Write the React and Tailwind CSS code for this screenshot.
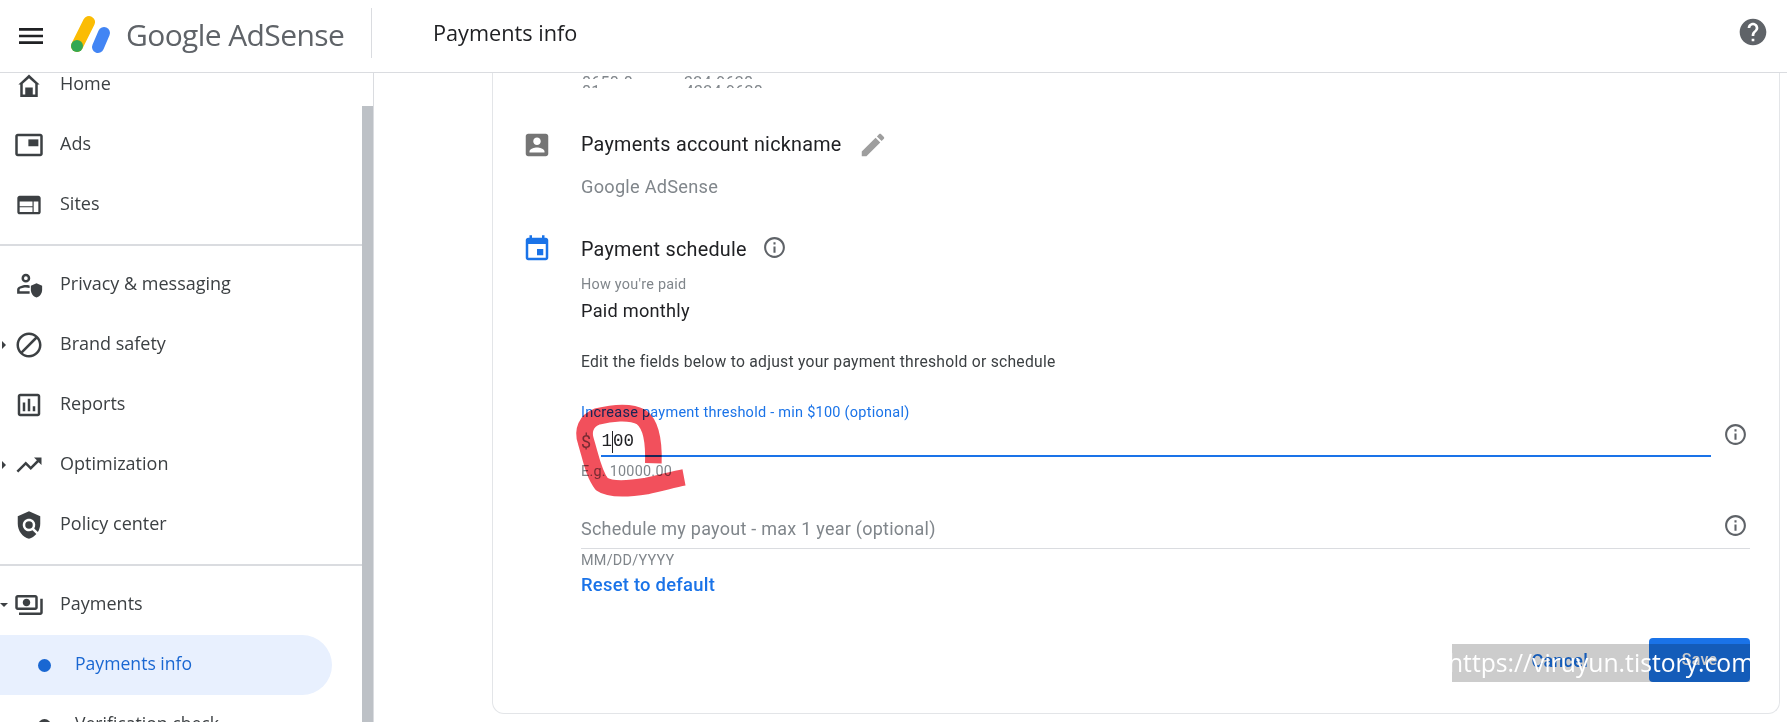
import React from 'react';

const Icon = ({ d, size = 30, className = '', children }) => (
    <svg viewBox="0 0 24 24" width={size} height={size} fill="currentColor" className={`shrink-0 ${className}`}>
        {d && <path fillRule="evenodd" d={d} />}
        {children}
    </svg>
);

const paths = {
    menu: 'M3 18h18v-2H3v2zm0-5h18v-2H3v2zm0-7v2h18V6H3z',
    web: 'M20 4H4c-1.1 0-2 .9-2 2v12c0 1.1.9 2 2 2h16c1.1 0 2-.9 2-2V6c0-1.1-.9-2-2-2zm-5 14H4v-4h11v4zm0-5H4V9h11v4zm5 5h-4V9h4v9z',
    block: 'M12 2C6.48 2 2 6.48 2 12s4.48 10 10 10 10-4.48 10-10S17.52 2 12 2zM4 12c0-4.42 3.58-8 8-8 1.85 0 3.55.63 4.9 1.69L5.69 16.9C4.63 15.55 4 13.85 4 12zm8 8c-1.85 0-3.55-.63-4.9-1.69L18.31 7.1C19.37 8.45 20 10.15 20 12c0 4.42-3.58 8-8 8z',
    reports: 'M19 3H5c-1.1 0-2 .9-2 2v14c0 1.1.9 2 2 2h14c1.1 0 2-.9 2-2V5c0-1.1-.9-2-2-2zm0 16H5V5h14v14zM7 10h2v7H7zm4-3h2v10h-2zm4 6h2v4h-2z',
    trending: 'M16 6l2.29 2.29-4.88 4.88-4-4L2 16.59 3.41 18l6-6 4 4 6.3-6.29L22 12V6z',
    policy: 'M21 5l-9-4-9 4v6c0 5.55 3.84 10.74 9 12 2.3-.56 4.33-1.9 5.88-3.71l-3.12-3.12c-1.94 1.29-4.58 1.07-6.29-.64-1.95-1.95-1.95-5.12 0-7.07 1.95-1.95 5.12-1.95 7.07 0 1.71 1.71 1.92 4.35.64 6.29l2.9 2.9C20.29 15.69 21 13.38 21 11V5z',
    payments: 'M19 14V6c0-1.1-.9-2-2-2H3c-1.1 0-2 .9-2 2v8c0 1.1.9 2 2 2h14c1.1 0 2-.9 2-2zm-2 0H3V6h14v8zm-7-7c-1.66 0-3 1.34-3 3s1.34 3 3 3 3-1.34 3-3-1.34-3-3-3zm13 0v11c0 1.1-.9 2-2 2H4v-2h17V7h2z',
    account: 'M19 3H5c-1.11 0-2 .9-2 2v14c0 1.1.89 2 2 2h14c1.1 0 2-.9 2-2V5c0-1.1-.9-2-2-2zm-7 3c1.66 0 3 1.34 3 3s-1.34 3-3 3-3-1.34-3-3 1.34-3 3-3zm6 12H6v-1c0-2 4-3.1 6-3.1s6 1.1 6 3.1v1z',
    edit: 'M3 17.25V21h3.75L17.81 9.94l-3.75-3.75L3 17.25zM20.71 7.04c.39-.39.39-1.02 0-1.41l-2.34-2.34c-.39-.39-1.02-.39-1.41 0l-1.83 1.83 3.75 3.75 1.83-1.83z',
    event: 'M17 12h-5v5h5v-5zM16 1v2H8V1H6v2H5c-1.11 0-1.99.9-1.99 2L3 19c0 1.1.89 2 2 2h14c1.1 0 2-.9 2-2V5c0-1.1-.9-2-2-2h-1V1h-2zm3 18H5V8h14v11z',
    info: 'M11 7h2v2h-2zm0 4h2v6h-2zm1-9C6.48 2 2 6.48 2 12s4.48 10 10 10 10-4.48 10-10S17.52 2 12 2zm0 18c-4.41 0-8-3.59-8-8s3.59-8 8-8 8 3.59 8 8-3.59 8-8 8z',
    help: 'M12 2C6.48 2 2 6.48 2 12s4.48 10 10 10 10-4.48 10-10S17.52 2 12 2zm1 17h-2v-2h2v2zm2.07-7.75l-.9.92C13.45 12.9 13 13.5 13 15h-2v-.5c0-1.1.45-2.1 1.17-2.83l1.24-1.26c.37-.36.59-.86.59-1.41 0-1.1-.9-2-2-2s-2 .9-2 2H8c0-2.21 1.79-4 4-4s4 1.79 4 4c0 .88-.36 1.68-.93 2.25z',
};

const navIcons = {
    home: (
        <Icon d="M12 3.500L3.500 11.500H5V21.500H19V11.500H20.500ZM12 6.500L17 11V19.500H7V11Z">
            <rect x="9" y="14" width="6" height="6.500" />
        </Icon>
    ),
    ads: (
        <Icon d="M21 3H3C1.900 3 1 3.900 1 5V19C1 20.100 1.900 21 3 21H21C22.100 21 23 20.100 23 19V5C23 3.900 22.100 3 21 3ZM21 19H3V5H21Z">
            <rect x="11.500" y="7.500" width="8" height="5.500" />
        </Icon>
    ),
    sites: <Icon d={paths.web} size={28} className="mx-[1px]" />,
    privacy: (
        <Icon d="M9.5 3a3.5 3.5 0 1 1 0 7 3.5 3.5 0 0 1 0-7zm0 2a1.5 1.500 0 1 0 0 3 1.500 1.500 0 0 0 0-3zM9.500 12c1 0 2 .12 3 .38v2.060c-1-.28-2-.44-3-.44-2.600 0-5 1-5 1.600V17h8v2H2.500v-3.400C2.500 13.300 7 12 9.500 12z">
            <path d="M18 10.500l4.500 2v3.300c0 2.900-1.900 5.600-4.500 6.200-2.600-.6-4.500-3.300-4.500-6.200v-3.300z" />
        </Icon>
    ),
    brand: <Icon d={paths.block} />,
    reports: <Icon d={paths.reports} />,
    optimization: <Icon d={paths.trending} />,
    policy: (
        <Icon d={paths.policy}>
            <circle cx="12" cy="12" r="3" />
        </Icon>
    ),
    payments: <Icon d={paths.payments} />,
};

const Caret = ({ open }) =>
    open ? (
        <span className="w-0 h-0 border-x-[4px] border-x-transparent border-t-[4px] border-t-[#3c4043]" />
    ) : (
        <span className="ml-[2px] w-0 h-0 border-y-[4px] border-y-transparent border-l-[4px] border-l-[#3c4043]" />
    );

const NavRow = ({ icon, label, caret }) => (
    <div className="h-[60px] flex items-center text-[#3c4043]">
        <div className="w-[14px] flex items-center">{caret && <Caret open={caret === 'open'} />}</div>
        {icon}
        <span className="ml-[16px] -mt-[3px] text-[18px] text-[#3c4043]">{label}</span>
    </div>
);

const Divider = () => <div className="h-[2px] my-[-1px] bg-[#dadce0]" />;

const Sidebar = () => (
    <aside className="w-[374px] shrink-0 flex border-r border-[#dadce0] overflow-hidden font-['Open_Sans',sans-serif]">
        <nav className="w-[362px] -mt-[18px]">
            <NavRow icon={navIcons.home} label="Home" />
            <NavRow icon={navIcons.ads} label="Ads" />
            <NavRow icon={navIcons.sites} label="Sites" />
            <div className="h-[10px]" />
            <Divider />
            <div className="h-[10px]" />
            <NavRow icon={navIcons.privacy} label="Privacy & messaging" />
            <NavRow icon={navIcons.brand} label="Brand safety" caret="closed" />
            <NavRow icon={navIcons.reports} label="Reports" />
            <NavRow icon={navIcons.optimization} label="Optimization" caret="closed" />
            <NavRow icon={navIcons.policy} label="Policy center" />
            <div className="h-[10px]" />
            <Divider />
            <div className="h-[10px]" />
            <NavRow icon={navIcons.payments} label="Payments" caret="open" />
            <div className="w-[332px] h-[60px] flex items-center bg-[#e8f0fe] rounded-r-full text-[#1967d2]">
                <span className="ml-[38px] w-[13px] h-[13px] rounded-full bg-[#1967d2]" />
                <span className="ml-[24px] -mt-[3px] text-[17.6px]">Payments info</span>
            </div>
            <div className="h-[60px] flex items-center text-[#3c4043]">
                <span className="ml-[38px] w-[13px] h-[13px] rounded-full bg-[#3c4043]" />
                <span className="ml-[24px] -mt-[3px] text-[17.6px]">Verification check</span>
            </div>
        </nav>
        <div className="w-[11px] mt-[33px] bg-[#bdc1c6]" />
    </aside>
);

const Header = () => (
    <header className="h-[73px] shrink-0 flex items-center border-b border-[#dadce0] bg-white">
        <Icon d={paths.menu} size={32} className="ml-[15px] text-[#202124]" />
        <svg viewBox="0 0 42 40" width="42" height="40" className="ml-[23px] -mt-[3px] shrink-0">
            <line x1="19" y1="7" x2="7" y2="31" stroke="#fbbc04" strokeWidth="12" strokeLinecap="round" />
            <circle cx="7" cy="31" r="6" fill="#34a853" />
            <line x1="34" y1="18" x2="28" y2="32" stroke="#4285f4" strokeWidth="12" strokeLinecap="round" />
        </svg>
        <span className="ml-[14px] w-[216px] -mt-[4px] text-[30px] text-[#5f6368] font-['Open_Sans',sans-serif] whitespace-nowrap tracking-[-0.6px]">Google AdSense</span>
        <div className="ml-[29px] -mt-[6px] h-[50px] w-px bg-[#dadce0]" />
        <span className="ml-[61px] -mt-[6px] text-[21.7px] text-[#202124] font-['Open_Sans',sans-serif]">Payments info</span>
        <Icon d={paths.help} size={32} className="ml-auto mr-[18px] -mt-[8px] text-[#5f6368]" />
    </header>
);

const PaymentCard = () => (
    <section className="h-full border border-t-0 border-[#e3e5e8] rounded-b-[12px] font-['Roboto',sans-serif] tracking-[0.25px]">
        {/* account id, cut off by the scroll and partly wiped out */}
        <div className="ml-[89px] pt-[1px] text-[16px] text-[#80868b] whitespace-pre">
            <div className="h-[5px] leading-[18px] overflow-hidden">8658-8           -324-9628</div>
            <div className="mt-[4px] h-[5px] leading-[18px] overflow-hidden">81                    4324 9628</div>
        </div>

        <div className="mt-[42px] flex items-center h-[30px]">
            <Icon d={paths.account} className="ml-[29px] text-[#757575]" />
            <span className="ml-[29px] text-[19.8px] text-[#202124]">Payments account nickname</span>
            <Icon d={paths.edit} className="ml-[16px] text-[#9e9e9e]" />
        </div>
        <div className="ml-[88px] mt-[14px] text-[18.2px] leading-[26px] text-[#80868b]">Google AdSense</div>

        <div className="mt-[35px] flex items-center h-[30px]">
            <Icon d={paths.event} className="ml-[29px] -mt-[3px] text-[#1a73e8]" />
            <span className="ml-[29px] -mt-[1px] text-[19.8px] text-[#202124]">Payment schedule</span>
            <Icon d={paths.info} size={25} className="ml-[15px] -mt-[5px] text-[#5f6368]" />
        </div>

        <div className="ml-[88px] mr-[29px]">
            <div className="mt-[11px] text-[14.4px] leading-[18px] text-[#80868b]">How you're paid</div>
            <div className="mt-[5px] text-[18.2px] leading-[24px] text-[#202124]">Paid monthly</div>
            <div className="mt-[29px] text-[15.7px] leading-[20px] text-[#3c4043]">Edit the fields below to adjust your payment threshold or schedule</div>

            <div className="mt-[32px] text-[14.5px] leading-[18px] text-[#1a73e8]">Increase payment threshold - min $100 (optional)</div>
            <div className="mt-[5px] flex items-start gap-[12px]">
                <div className="flex-1">
                    <div className="h-[28px] pt-[1px] flex items-center">
                        <span className="text-[18px] text-[#80868b]">$</span>
                        <span className="ml-[10px] font-['Liberation_Mono',monospace] text-[17.5px] tracking-[0] text-[#202124]">1</span>
                        <span className="w-px h-[22px] bg-[#202124]" />
                        <span className="font-['Liberation_Mono',monospace] text-[17.5px] tracking-[0] text-[#202124]">00</span>
                    </div>
                    <div className="ml-[20px] h-[2px] bg-[#1a73e8]" />
                </div>
                <Icon d={paths.info} size={25} className="-mt-[5px] mr-[2px] text-[#5f6368]" />
            </div>
            <div className="mt-[6px] text-[14.4px] leading-[18px] text-[#80868b]">E.g. 10000.00</div>

            <div className="mt-[34px] flex items-center border-b border-[#dadce0] h-[34px] pb-[6px] relative">
                <span className="flex-1 text-[18px] text-[#80868b]">Schedule my payout - max 1 year (optional)</span>
                <Icon d={paths.info} size={25} className="absolute right-[2px] -top-[2px] text-[#5f6368]" />
            </div>
            <div className="mt-[3px] text-[14.4px] leading-[18px] text-[#80868b]">MM/DD/YYYY</div>
            <button className="block mt-[3px] text-[18.4px] leading-[24px] font-medium text-[#1a73e8]">Reset to default</button>
        </div>

        <div className="mt-[41px] mr-[29px] flex justify-end items-center">
            <button className="mr-[61px] text-[18px] font-medium text-[#1a73e8]">Cancel</button>
            <button className="w-[101px] h-[44px] rounded-[4px] bg-[#1a73e8] text-[16px] font-medium text-white">Save</button>
        </div>
    </section>
);

const App = () => (
    <div className="relative h-[722px] w-[1787px] overflow-hidden bg-white flex flex-col">
        <Header />
        <div className="flex flex-1 min-h-0">
            <Sidebar />
            <main className="flex-1 pl-[118px] pr-[7px] pb-[8px]">
                <PaymentCard />
            </main>
        </div>

        {/* red pen circle drawn over the field */}
        <svg viewBox="0 0 420 360" width="140" height="120" className="absolute left-[560px] top-[390px] mix-blend-multiply" fill="none">
            <path
                d="M372 262 C340 268 300 280 260 288 C210 296 150 300 125 282 C100 250 92 200 78 155 C66 120 80 92 110 80 C150 70 210 62 245 82 C275 105 282 160 280 220"
                stroke="#f2505c"
                strokeWidth="50"
            />
        </svg>

        {/* blog watermark */}
        <div className="absolute left-[1452px] top-[644px] w-[298px] h-[38px] bg-black/20 flex items-center justify-center text-white text-[24.7px] font-['Open_Sans',sans-serif] whitespace-nowrap">
            https://viruyun.tistory.com
        </div>
    </div>
);

export default App;
